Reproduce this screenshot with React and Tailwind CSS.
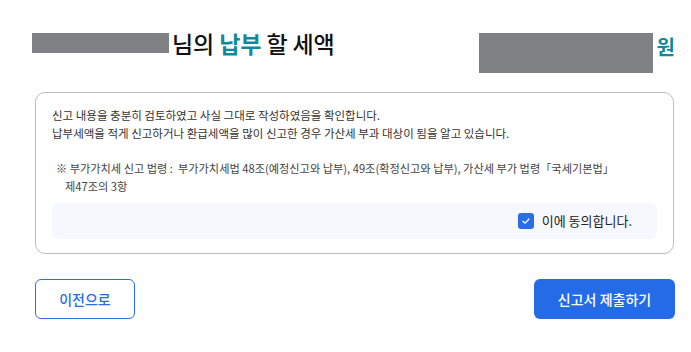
export default function App() {
  const font = { fontFamily: '"Noto Sans CJK KR", "Noto Sans", sans-serif' };
  return (
    <div className="w-[691px] h-[352px] bg-white text-[#222]" style={font}>
      <div className="pl-[35px] pr-[16px] pt-[33px]">
        <div className="flex items-start justify-between">
          <div className="flex items-center h-[20px]">
            <div className="w-[137px] h-[20px] bg-[#808184] -ml-[3px]" />
            <div className="ml-[3px] text-[23px] leading-[20px] font-medium text-[#111] tracking-[-0.1px]">
              님의 <span className="text-[#0f8a9c] font-bold">납부</span> 할 세액
            </div>
          </div>
          <div className="flex items-start">
            <div className="w-[174px] h-[40px] bg-[#808184]" />
            <div className="ml-[4px] mt-[3px] text-[20px] leading-[22px] font-bold text-[#0f8a9c]">원</div>
          </div>
        </div>

        <div className="mt-[19px] mr-[1px] border border-[#bdbdbd] rounded-[10px] px-[16px] pt-[13px] pb-[14px]">
          <div className="text-[11.5px] leading-[18px] text-[#333]">
            <p>신고 내용을 충분히 검토하였고 사실 그대로 작성하였음을 확인합니다.</p>
            <p>납부세액을 적게 신고하거나 환급세액을 많이 신고한 경우 가산세 부과 대상이 됨을 알고 있습니다.</p>
          </div>
          <div className="mt-[17px] text-[11.2px] leading-[18px] text-[#444] pl-[4px]">
            <p>※ 부가가치세 신고 법령 :&nbsp; 부가가치세법 48조(예정신고와 납부), 49조(확정신고와 납부), 가산세 부가 법령「국세기본법」</p>
            <p className="pl-[9px]">제47조의 3항</p>
          </div>
          <div className="mt-[8px] h-[36px] rounded-[6px] bg-[#f6f8fd] flex items-center justify-end pr-[25px]">
            <div className="flex items-center gap-[8px]">
              <span className="w-[16px] h-[16px] rounded-[3px] bg-[#2b6de8] flex items-center justify-center">
                <svg width="10" height="10" viewBox="0 0 10 10" fill="none">
                  <path d="M2 5.2 L4.2 7.2 L8 3" stroke="white" strokeWidth="1.2" strokeLinecap="round" strokeLinejoin="round" />
                </svg>
              </span>
              <span className="text-[13px] leading-[18px] text-[#222]">이에 동의합니다.</span>
            </div>
          </div>
        </div>

        <div className="mt-[25px] flex justify-between">
          <button className="w-[100px] h-[40px] rounded-[6px] border border-[#2b6de8] bg-white text-[14px] text-[#2b6de8] font-medium">
            이전으로
          </button>
          <button className="w-[141px] h-[40px] rounded-[6px] bg-[#256be8] text-[14px] text-white font-medium">
            신고서 제출하기
          </button>
        </div>
      </div>
    </div>
  );
}
